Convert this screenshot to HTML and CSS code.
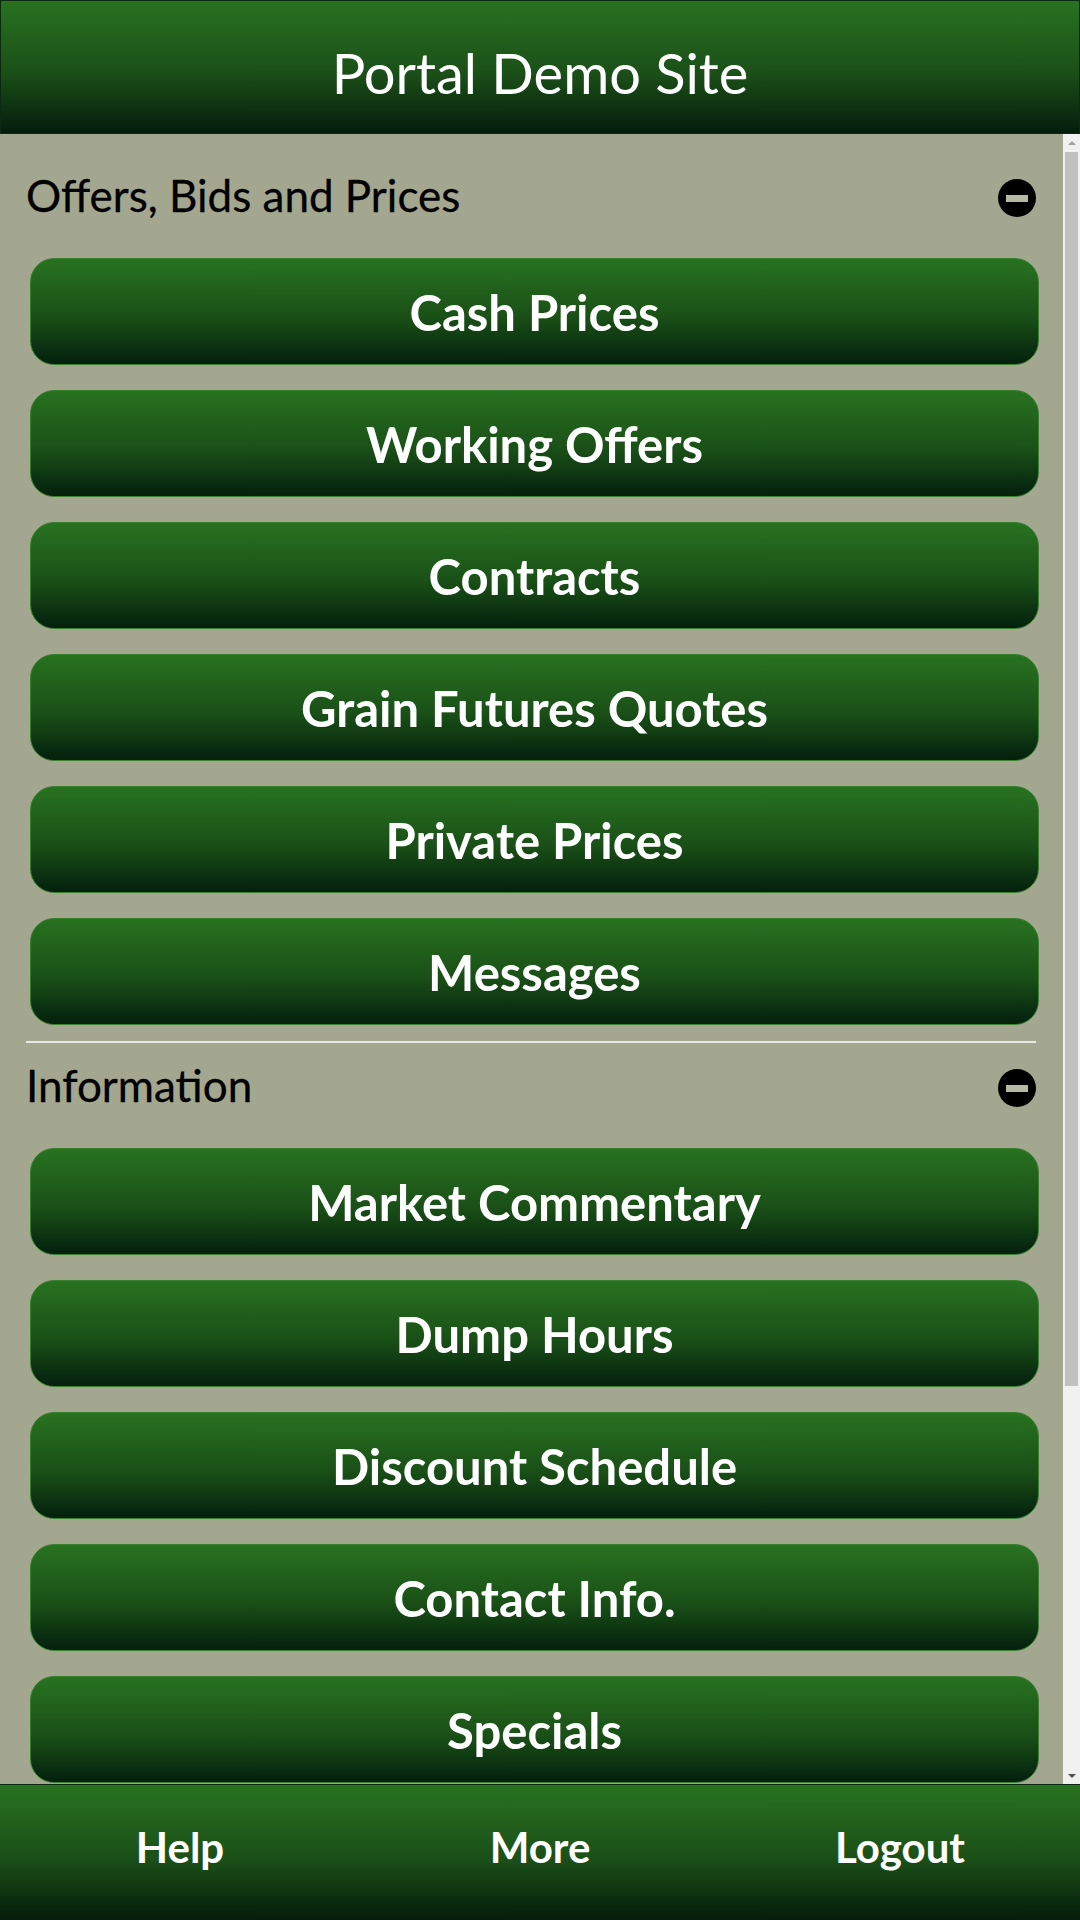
FILE: index.html
```html
<html>
<head>
<title>Portal Demo Site</title>
<link rel="stylesheet" href="styles.css">
</head>
<body>

<div class="app">
  <header class="topbar">
    <h1>Portal Demo Site</h1>
  </header>

  <div class="page">
    <main class="content">
      <section class="group">
        <div class="group-head">
          <h2>Offers, Bids and Prices</h2>
          <span class="toggle"></span>
        </div>
        <nav class="menu">
          <a class="menu-btn" href="#">Cash Prices</a>
          <a class="menu-btn" href="#">Working Offers</a>
          <a class="menu-btn" href="#">Contracts</a>
          <a class="menu-btn" href="#">Grain Futures Quotes</a>
          <a class="menu-btn" href="#">Private Prices</a>
          <a class="menu-btn" href="#">Messages</a>
        </nav>
      </section>

      <section class="group">
        <div class="group-head">
          <h2>Information</h2>
          <span class="toggle"></span>
        </div>
        <nav class="menu">
          <a class="menu-btn" href="#">Market Commentary</a>
          <a class="menu-btn" href="#">Dump Hours</a>
          <a class="menu-btn" href="#">Discount Schedule</a>
          <a class="menu-btn" href="#">Contact Info.</a>
          <a class="menu-btn" href="#">Specials</a>
        </nav>
      </section>
    </main>

    <div class="scrollbar">
      <span class="sb-arrow up"></span>
      <span class="sb-thumb"></span>
      <span class="sb-arrow down"></span>
    </div>
  </div>

  <footer class="tabbar">
    <a href="#">Help</a>
    <a href="#">More</a>
    <a href="#">Logout</a>
  </footer>
</div>

</body>
</html>
```

FILE: styles.css
```css
html, body {
  margin: 0;
  padding: 0;
  height: 100%;
}

body {
  font-family: 'Lato', 'Liberation Sans', sans-serif;
  background-color: #a4a78f;
  color: #000;
}

.app {
  display: flex;
  flex-direction: column;
  height: 100vh;
}

.topbar {
  box-sizing: border-box;
  height: 134px;
  padding-top: 38px;
  border: 1px solid #0b2a11;
  background: linear-gradient(to bottom, #287220, #1b4f18 55%, #041c0c);
  text-align: center;
}

.topbar h1 {
  margin: 0;
  font-size: 56px;
  font-weight: 400;
  line-height: 1.2;
  color: #fff;
}

.page {
  flex: 1;
  display: flex;
  min-height: 0;
}

.content {
  flex: 1;
  overflow-y: auto;
  padding-top: 19px;
}

.scrollbar {
  width: 17px;
  display: flex;
  flex-direction: column;
  background-color: #f1f1f1;
}

.sb-arrow {
  height: 17px;
  display: flex;
  justify-content: center;
  align-items: center;
}

.sb-arrow::before {
  content: '';
  border-left: 4px solid transparent;
  border-right: 4px solid transparent;
}

.sb-arrow.up::before {
  border-bottom: 4px solid #a3a3a3;
}

.sb-arrow.down {
  margin-top: auto;
}

.sb-arrow.down::before {
  border-top: 4px solid #505050;
}

.sb-thumb {
  height: 1234px;
  margin: 1px 2px 0;
  background-color: #c1c1c1;
}

.group {
  margin: 0 27px 0 26px;
  border-bottom: 2px solid #e8e9e0;
}

.group + .group {
  border-bottom: none;
}

.group-head {
  display: flex;
  justify-content: space-between;
  align-items: flex-start;
  padding: 16px 0 36px;
}

.group-head h2 {
  margin: 0;
  font-size: 44px;
  font-weight: 400;
  line-height: 53px;
  -webkit-text-stroke: 0.3px #000;
}

.toggle {
  display: flex;
  justify-content: center;
  align-items: center;
  width: 38px;
  height: 38px;
  margin-top: 10px;
  border-radius: 50%;
  background-color: #000;
}

.toggle::before {
  content: '';
  width: 22px;
  height: 7px;
  background-color: #b7b9a7;
}

.menu {
  display: flex;
  flex-direction: column;
  gap: 25px;
  margin: 0 -3px 0 4px;
  padding-bottom: 16px;
}

.menu-btn {
  box-sizing: border-box;
  display: flex;
  justify-content: center;
  align-items: center;
  height: 107px;
  border: 1px solid #3a7f30;
  border-radius: 24px;
  background: linear-gradient(to bottom, #287220, #1a5017 55%, #03200d);
  color: #fff;
  font-size: 49px;
  font-weight: 700;
  text-decoration: none;
}

.tabbar {
  box-sizing: border-box;
  display: grid;
  grid-template-columns: repeat(3, 1fr);
  height: 136px;
  padding-top: 37px;
  border-top: 1px solid #0b2a11;
  background: linear-gradient(to bottom, #287220, #1b4f18 55%, #041c0c);
}

.tabbar a {
  text-align: center;
  color: #fff;
  font-size: 42px;
  font-weight: 700;
  line-height: 1.2;
  text-decoration: none;
}
```
